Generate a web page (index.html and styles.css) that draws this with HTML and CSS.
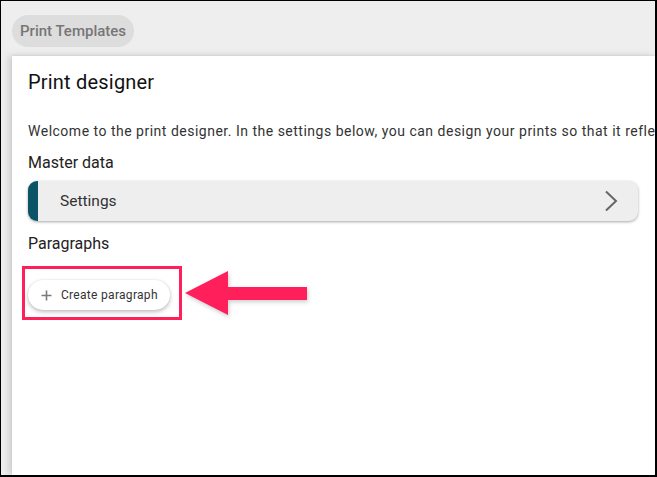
FILE: index.html
```html
<!DOCTYPE html>
<html>
<head>
<meta charset="utf-8">
<link rel="stylesheet" href="styles.css">
</head>
<body>
<div class="frame">
  <div class="topbar">
    <span class="chip">Print Templates</span>
  </div>
  <div class="card">
    <h1 class="title">Print designer</h1>
    <p class="intro">Welcome to the print designer. In the settings below, you can design your prints so that it reflects your corporate design.</p>
    <h2 class="section">Master data</h2>
    <div class="row">
      <span class="row-accent"></span>
      <span class="row-label">Settings</span>
      <svg class="chev" width="14" height="22" viewBox="0 0 14 22"><path d="M2 1.5 L12 11 L2 20.5" fill="none" stroke="#666" stroke-width="2"/></svg>
    </div>
    <h2 class="section para">Paragraphs</h2>
    <div class="btn-area">
      <button class="create-btn">
        <svg width="11" height="11" viewBox="0 0 11 11"><path d="M5.5 0.5 V10.5 M0.5 5.5 H10.5" stroke="#7a7a7a" stroke-width="1.6"/></svg>
        <span>Create paragraph</span>
      </button>
      <div class="highlight"></div>
      <svg class="arrow" width="126" height="50" viewBox="0 0 126 50">
        <polygon points="2,23 45,1 45,17 124,17 124,30 45,30 45,45" fill="#ff1f5a"/>
      </svg>
    </div>
  </div>
</div>
</body>
</html>
```
FILE: styles.css
```css
* { box-sizing: border-box; }
html, body { margin: 0; padding: 0; }
body {
  width: 657px;
  height: 477px;
  overflow: hidden;
  font-family: Roboto, "Liberation Sans", Arial, sans-serif;
  background: #fff;
}
.frame {
  width: 657px;
  height: 477px;
  border-top: 1px solid #000;
  border-left: 1px solid #000;
  border-right: 2px solid #000;
  border-bottom: 2px solid #000;
  background: #eeeeee;
  display: flex;
  flex-direction: column;
  overflow: hidden;
}
.topbar {
  height: 55px;
  padding: 14px 0 0 11px;
  flex: none;
}
.chip {
  display: inline-flex;
  align-items: center;
  height: 32px;
  padding: 0 8px;
  border-radius: 16px;
  background: #dddddd;
  color: #767676;
  font-size: 15px;
  font-weight: 500;
}
.card {
  flex: 1;
  margin-left: 11px;
  background: #fff;
  box-shadow: -3px 0 7px rgba(0,0,0,0.14), 0 -1px 2px rgba(0,0,0,0.05);
  padding: 14px 0 0 16px;
  overflow: hidden;
}
.title {
  margin: 0;
  font-size: 20px;
  font-weight: 400;
  line-height: 24px;
  letter-spacing: 0.2px;
  color: #111;
}
.intro {
  margin: 27px 0 0 0;
  font-size: 14px;
  line-height: 20px;
  letter-spacing: 0.5px;
  color: #333;
  white-space: nowrap;
  overflow: hidden;
}
.section {
  margin: 11px 0 0 0;
  font-size: 16px;
  font-weight: 400;
  line-height: 22px;
  color: #222;
}
.row {
  margin-top: 7px;
  width: 610px;
  height: 40px;
  background: #eeeeee;
  border-radius: 9px;
  box-shadow: 0 1px 3px rgba(0,0,0,0.35);
  display: flex;
  align-items: center;
  overflow: hidden;
}
.row-accent {
  width: 10px;
  height: 100%;
  background: #0b5468;
  flex: none;
}
.row-label {
  margin-left: 22px;
  font-size: 15.5px;
  color: #333;
  flex: 1;
}
.chev { margin-right: 20px; }
.section.para { margin-top: 12px; }
.btn-area {
  position: relative;
  margin-top: 25px;
  height: 40px;
}
.create-btn {
  display: inline-flex;
  align-items: center;
  gap: 9px;
  height: 30px;
  width: 142px;
  padding: 0 0 0 13px;
  border: none;
  border-radius: 15px;
  background: #fff;
  box-shadow: 0 2px 4px rgba(0,0,0,0.25), 0 0 2px rgba(0,0,0,0.1);
  font-family: Roboto, "Liberation Sans", Arial, sans-serif;
  font-size: 12px;
  letter-spacing: 0.3px;
  color: #333;
}
.highlight {
  position: absolute;
  left: -6px;
  top: -14px;
  width: 160px;
  height: 54px;
  border: 3px solid #ff1f5a;
}
.arrow {
  position: absolute;
  left: 155px;
  top: -10px;
  filter: drop-shadow(1px 2px 2px rgba(0,0,0,0.2));
}
```
